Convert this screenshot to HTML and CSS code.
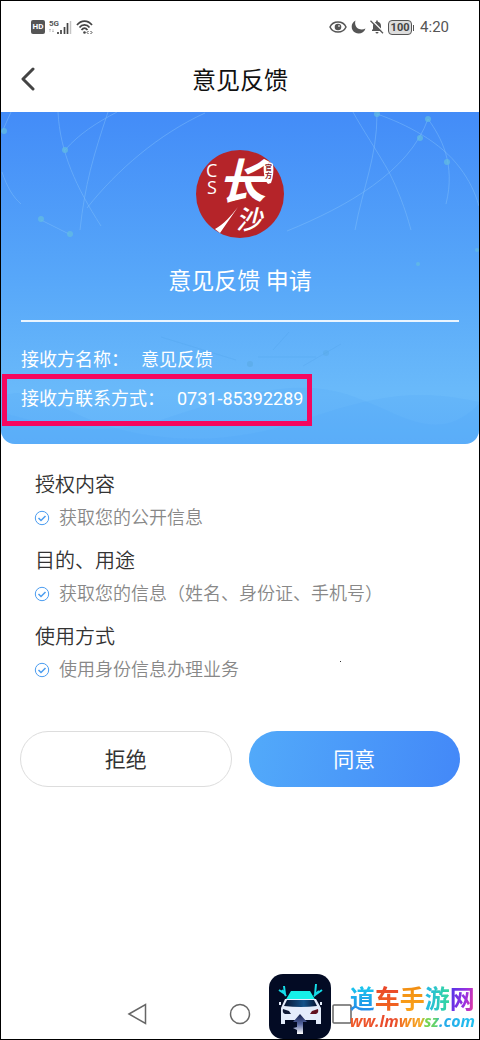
FILE: index.html
```html
<!DOCTYPE html>
<html lang="zh-CN">
<head>
<meta charset="UTF-8">
<meta name="viewport" content="width=device-width, initial-scale=1.0">
<title>意见反馈</title>
<link rel="stylesheet" href="styles.css">
</head>
<body>

<div class="phone">
    <!-- Status bar -->
    <div class="status-bar">
        <div class="status-group">
            <span class="hd">HD</span>
            <svg width="23" height="16" viewBox="0 0 23 16">
                <text x="0" y="7" class="net">5G</text>
                <path d="M1 13V10M0 11l1-1 1 1M4 10v3M3 12l1 1 1-1" fill="none" stroke="#bbb" stroke-width="0.8"/>
                <path d="M9 15v-2M12 15v-4M15.5 15V8M18.5 15V4" stroke="#444" stroke-width="1.7"/>
                <path d="M21.5 15V2" stroke="#c4c4c4" stroke-width="1.5"/>
            </svg>
            <svg width="18" height="16" viewBox="0 0 18 16">
                <g fill="none" stroke="#444" stroke-width="1.7">
                    <path d="M1 6C5 0.8 12 0.8 16 6"/>
                    <path d="M3.5 8.5C6 5 11 5 13.5 8.5"/>
                    <path d="M5.5 11c2-2.5 4-2.5 6 0"/>
                </g>
                <circle cx="8.5" cy="13.5" r="1.3" fill="#444"/>
                <path d="M12.5 12l-1.5 1.5 1.5 1.5M14.500 12l1.5 1.5-1.500 1.500" fill="none" stroke="#444"/>
            </svg>
        </div>
        <div class="status-group">
            <svg width="18" height="14" viewBox="0 0 18 14">
                <path d="M1 7C4 0.3 14 0.3 17 7C14 13.7 4 13.7 1 7Z" fill="none" stroke="#555" stroke-width="1.5"/>
                <circle cx="9" cy="7" r="3.3" fill="#555"/>
                <circle cx="10" cy="6" r="1" fill="#ccc"/>
            </svg>
            <svg width="15" height="14" viewBox="0 0 15 14">
                <path d="M4.5 0.5C-0.5 3 -0.5 10 4 12.5C8 15 13 13 14.5 8.5C8.5 11.5 2.5 7 4.5 0.5Z" fill="#555"/>
            </svg>
            <svg width="14" height="14" viewBox="0 0 14 14">
                <path d="M2 11V10L3 9V6C3 3.5 4.5 2 6.2 1.7V0.5H7.8V1.7C9.5 2 11 3.5 11 6V9L12 10V11Z" fill="#555"/>
                <path d="M5.5 12h3a1.5 1.5 0 0 1-3 0Z" fill="#555"/>
                <path d="M1.5 0L13.5 12" stroke="#fff" stroke-width="1.5"/>
                <path d="M0.5 0.8L13 13.3" stroke="#555" stroke-width="1.3"/>
            </svg>
            <span class="battery">100</span>
            <span class="time">4:20</span>
        </div>
    </div>

    <!-- Title bar -->
    <header class="title-bar">
        <button class="back" aria-label="返回">
            <svg width="14" height="24" viewBox="0 0 14 24">
                <path d="M12 2L2 12L12 22" fill="none" stroke="#444" stroke-width="3" stroke-linecap="round" stroke-linejoin="round"/>
            </svg>
        </button>
        <h1>意见反馈</h1>
    </header>

    <!-- Receiver info -->
    <section class="hero">
        <svg class="hero-art" viewBox="0 0 478 332" preserveAspectRatio="xMidYMid slice">
            <g fill="none" stroke="#83c2fa" stroke-opacity="0.45">
                <path d="M57 0C59 40 75 75 100 114"/>
                <path d="M64 38C78 22 95 11 116 0"/>
                <path d="M107 0C92 45 84 72 79 118"/>
                <path d="M204 1C158 22 116 58 86 96"/>
                <path d="M1 20L10 0M1 60C6 75 12 85 20 92M40 108L68 122"/>
                <path d="M352 0C360 15 378 42 388 60C397 78 404 96 410 118"/>
                <path d="M376 2C405 12 440 30 459 56C468 68 474 80 478 94"/>
                <path d="M376 2C376 45 362 75 354 118"/>
                <path d="M427 7C408 60 345 95 286 119"/>
                <path d="M427 7C440 25 455 52 445 92"/>
            </g>
            <g fill="#64bde0" fill-opacity="0.7">
                <circle cx="3" cy="19" r="3"/>
                <circle cx="64" cy="38" r="3"/>
                <circle cx="40" cy="107" r="3"/>
                <circle cx="69" cy="122" r="3"/>
                <circle cx="376" cy="2" r="3"/>
                <circle cx="427" cy="7" r="3"/>
                <circle cx="419" cy="26" r="3"/>
                <circle cx="446" cy="50" r="3"/>
                <circle cx="417" cy="152" r="2"/>
                <circle cx="476" cy="138" r="2"/>
            </g>
            <path d="M160 225L235 248M257 245H315M272 238L288 220M302 254L340 232" fill="none" stroke="#4c9fe8" stroke-opacity="0.25"/>
            <circle cx="249" cy="252" r="3" fill="#58a8e0" fill-opacity="0.5"/>
            <circle cx="325" cy="241" r="3" fill="#58a8e0" fill-opacity="0.4"/>
            <path d="M0 300C50 315 100 325 160 308C230 285 290 265 345 282C400 300 435 335 478 292V332H0Z" fill="#4aa1fa" fill-opacity="0.16"/>
            <path d="M0 285C30 270 60 300 110 315C170 332 230 330 290 312C370 285 410 275 478 290V332H0Z" fill="#4aa1fa" fill-opacity="0.16"/>
        </svg>

        <div class="hero-body">
            <svg width="88" height="88" viewBox="0 0 88 88" role="img" aria-label="长沙">
                <circle cx="44" cy="44" r="44" fill="#b52429"/>
                <text x="10" y="27" class="logo-cs">C</text>
                <text x="11" y="44" class="logo-cs">S</text>
                <text x="22" y="49" class="logo-chang">长</text>
                <text x="40" y="79" class="logo-sha">沙</text>
                <path d="M42 57C36 66 30 74 24 83L19 79C28 74 35 66 42 57Z" fill="#fff"/>
                <path d="M68 13C71 11 75 12 77 14C78 21 77 28 75 33L72 34C68 30 67 20 68 13Z" fill="#fff"/>
                <text x="69" y="20" class="logo-seal">官</text>
                <text x="69" y="28" class="logo-seal">方</text>
            </svg>
            <h2>意见反馈 申请</h2>
            <dl class="receiver">
                <div class="receiver-row">
                    <dt>接收方名称：</dt>
                    <dd>意见反馈</dd>
                </div>
                <div class="receiver-row marked">
                    <dt>接收方联系方式：</dt>
                    <dd>0731-85392289</dd>
                </div>
            </dl>
        </div>
    </section>

    <!-- Permissions -->
    <main class="content">
        <section class="scope">
            <h3>授权内容</h3>
            <p><svg class="tick" width="16" height="16" viewBox="0 0 16 16"><circle cx="8" cy="8" r="6.7"/><path d="M4.5 8L7 10.5L11.5 6"/></svg>获取您的公开信息</p>
        </section>
        <section class="scope">
            <h3>目的、用途</h3>
            <p><svg class="tick" width="16" height="16" viewBox="0 0 16 16"><circle cx="8" cy="8" r="6.7"/><path d="M4.5 8L7 10.5L11.5 6"/></svg>获取您的信息（姓名、身份证、手机号）</p>
        </section>
        <section class="scope">
            <h3>使用方式</h3>
            <p><svg class="tick" width="16" height="16" viewBox="0 0 16 16"><circle cx="8" cy="8" r="6.7"/><path d="M4.5 8L7 10.5L11.5 6"/></svg>使用身份信息办理业务</p>
            <span class="speck"></span>
        </section>
    </main>

    <div class="actions">
        <button class="btn">拒绝</button>
        <button class="btn btn-primary">同意</button>
    </div>

    <!-- System navigation -->
    <nav class="nav-bar">
        <button aria-label="返回上一页"><svg width="22" height="22" viewBox="0 0 22 22"><path d="M2 11L18.5 1.5V20.5Z"/></svg></button>
        <button aria-label="主页"><svg width="22" height="22" viewBox="0 0 22 22"><circle cx="11" cy="11" r="9.5"/></svg></button>
        <button aria-label="最近任务"><svg width="22" height="22" viewBox="0 0 22 22"><rect x="2" y="2" width="18" height="18" rx="1"/></svg></button>
    </nav>

    <!-- Site mark -->
    <div class="site-mark">
        <svg width="62" height="65" viewBox="0 0 62 65">
            <defs>
                <linearGradient id="arrow" x1="0" y1="0" x2="0" y2="1">
                    <stop offset="0" stop-color="#101c48"/>
                    <stop offset="0.5" stop-color="#5565a0"/>
                    <stop offset="1" stop-color="#fff"/>
                </linearGradient>
                <linearGradient id="glass" x1="0" y1="0" x2="1" y2="0">
                    <stop offset="0" stop-color="#071331"/>
                    <stop offset="0.6" stop-color="#12528a"/>
                    <stop offset="1" stop-color="#071331"/>
                </linearGradient>
            </defs>
            <rect width="62" height="65" rx="14" fill="#030b24"/>
            <path d="M22 17H41L47 27H16Z" fill="#15f0e8"/>
            <path d="M16 25H47L52 34V50H47V46H16V50H12V34Z" fill="#e4ecfb"/>
            <path d="M18 26H45L48 32Q32 34 15 32Z" fill="url(#glass)"/>
            <path d="M10 28h2v3h-2ZM51 28h2v3h-2Z" fill="#e4ecfb"/>
            <path d="M14 35L20 37L22 40H16Q13 39 14 35Z" fill="#101936"/>
            <path d="M49 35L43 37L41 40H47Q50 39 49 35Z" fill="#60101f"/>
            <path d="M31 40L38 48H34V60H28V56L24 54L28 53V48H24Z" fill="url(#arrow)"/>
            <g fill="none" stroke="#15dce8" stroke-width="2">
                <path d="M10 16L16 20L15 12M13 16L17 22"/>
                <path d="M53 16L46 21L47 10M50 17L45 22"/>
            </g>
        </svg>
        <div class="site-text">
            <div class="site-name"><span class="c-dao">道</span><span class="c-che">车</span><span class="c-shou">手</span><span class="c-you">游</span><span class="c-wang">网</span></div>
            <div class="site-url">ww.lmwwsz.com</div>
        </div>
    </div>
</div>

</body>
</html>
```

FILE: styles.css
```css
/* Reset */
*,
*::before,
*::after {
    box-sizing: border-box;
    margin: 0;
    padding: 0;
}

body {
    background: #fff;
    color: #333;
    font-family: Roboto, 'Noto Sans CJK SC', sans-serif;
}

button {
    font-family: inherit;
    background: none;
    border: none;
    cursor: pointer;
}

svg {
    display: block;
    flex-shrink: 0;
}

.phone {
    position: relative;
    display: flex;
    flex-direction: column;
    min-height: 100vh;
    border: 1px solid #000;
}

/* Status bar */
.status-bar {
    display: flex;
    justify-content: space-between;
    align-items: center;
    height: 52px;
    padding: 0 30px;
}

.status-group {
    display: flex;
    align-items: center;
    gap: 4px;
}

.hd {
    width: 14px;
    height: 14px;
    background: #555;
    border-radius: 2px;
    color: #fff;
    font-size: 8px;
    font-weight: bold;
    line-height: 14px;
    text-align: center;
}

.net {
    font-size: 8px;
    font-weight: bold;
    fill: #555;
}

.battery {
    position: relative;
    width: 24px;
    height: 15px;
    border: 1px solid #555;
    border-radius: 4px;
    background: #ddd;
    color: #444;
    font-size: 11px;
    font-weight: bold;
    line-height: 13px;
    text-align: center;
}

.battery::after {
    content: "";
    position: absolute;
    top: 4px;
    right: -3px;
    width: 1px;
    height: 6px;
    background: #555;
}

.time {
    margin-left: 4px;
    color: #555;
    font-size: 15px;
}

/* Title bar */
.title-bar {
    position: relative;
    height: 59px;
    text-align: center;
}

.title-bar h1 {
    color: #111;
    font-size: 24px;
    font-weight: normal;
    line-height: 56px;
}

.back {
    position: absolute;
    top: 14px;
    left: 20px;
}

/* Blue card */
.hero {
    position: relative;
    overflow: hidden;
    border-radius: 0 0 14px 14px;
    background: linear-gradient(#438cf8, #57a7f9 50%, #6abafa 85%, #62b3fb);
    color: #fff;
}

.hero-art {
    position: absolute;
    width: 100%;
    height: 100%;
}

.hero-body {
    position: relative;
    display: flex;
    flex-direction: column;
    align-items: center;
    padding: 38px 20px 26px;
}

.hero-body h2 {
    margin: 27px 0 21px;
    font-size: 23px;
    font-weight: normal;
    line-height: 34px;
}

.logo-cs {
    font-family: 'Open Sans', sans-serif;
    font-size: 18px;
    fill: #fff;
}

.logo-chang {
    font-size: 48px;
    font-style: italic;
    font-weight: bold;
    fill: #fff;
}

.logo-sha {
    font-size: 26px;
    font-style: italic;
    font-weight: 500;
    fill: #fff;
}

.logo-seal {
    font-size: 7px;
    font-weight: bold;
    fill: #8c2328;
}

.receiver {
    align-self: stretch;
    border-top: 2px solid #eaf5ff;
    padding-top: 18px;
}

.receiver-row {
    position: relative;
    display: flex;
    gap: 12px;
    font-size: 18px;
    line-height: 39px;
}

.marked::before {
    content: "";
    position: absolute;
    top: -5px;
    left: -19px;
    width: 310px;
    height: 52px;
    border: 5px solid #f5075f;
}

/* Permissions */
.content {
    display: flex;
    flex-direction: column;
    gap: 10px;
    padding: 24px 34px 0;
}

.scope {
    position: relative;
}

.scope h3 {
    color: #333;
    font-size: 20px;
    font-weight: 350;
    line-height: 34px;
}

.scope p {
    display: flex;
    align-items: center;
    gap: 9px;
    color: #888;
    font-size: 18px;
    font-weight: 350;
    line-height: 32px;
}

.tick {
    margin-left: -1px;
    fill: none;
    stroke: #4a9cf0;
}

.tick path {
    stroke-width: 1.5;
}

.speck {
    position: absolute;
    top: 41px;
    left: 305px;
    width: 1px;
    height: 1px;
    background: #333;
}

/* Buttons */
.actions {
    display: grid;
    grid-template-columns: 1fr 1fr;
    gap: 17px;
    padding: 45px 19px 0;
}

.btn {
    height: 56px;
    padding-bottom: 2px;
    border: 1px solid #ddd;
    border-radius: 28px;
    color: #333;
    font-size: 21px;
}

.btn-primary {
    border: none;
    background: linear-gradient(100deg, #52aafa, #4388f8);
    color: #fff;
}

/* System navigation */
.nav-bar {
    display: flex;
    justify-content: center;
    gap: 80px;
    margin-top: auto;
    padding-bottom: 14px;
}

.nav-bar svg {
    fill: none;
    stroke: #666;
    stroke-width: 1.5;
}

/* Site mark */
.site-mark {
    position: absolute;
    right: 4px;
    bottom: 0;
    display: flex;
    align-items: center;
    gap: 19px;
}

.site-name {
    display: flex;
    font-family: 'Noto Sans CJK SC', sans-serif;
    font-size: 25px;
    font-weight: bold;
    line-height: 28px;
}

.site-name span,
.site-url {
    background-clip: text;
    -webkit-background-clip: text;
    color: transparent;
}

.c-dao {
    background-image: linear-gradient(#18d0ee, #2489e8);
}

.c-che {
    background-image: linear-gradient(#e8402c, #f26a1e);
}

.c-shou {
    background-image: linear-gradient(#f08a10, #fba41c);
}

.c-you {
    background-image: linear-gradient(90deg, #24b7e8, #35d99a);
}

.c-wang {
    background-image: linear-gradient(100deg, #4a35e8, #9a30e0 60%, #f03a90);
}

.site-url {
    background-image: linear-gradient(90deg, #f05a28, #e8482c 35%, #f58a1c 45%, #f5a623 57%, #7ed64a 60%, #5cd070 69%, #28a8e8 72%, #20c0f0);
    font-family: 'Open Sans', sans-serif;
    font-size: 16px;
    font-style: italic;
    font-weight: bold;
    line-height: 20px;
}
```
